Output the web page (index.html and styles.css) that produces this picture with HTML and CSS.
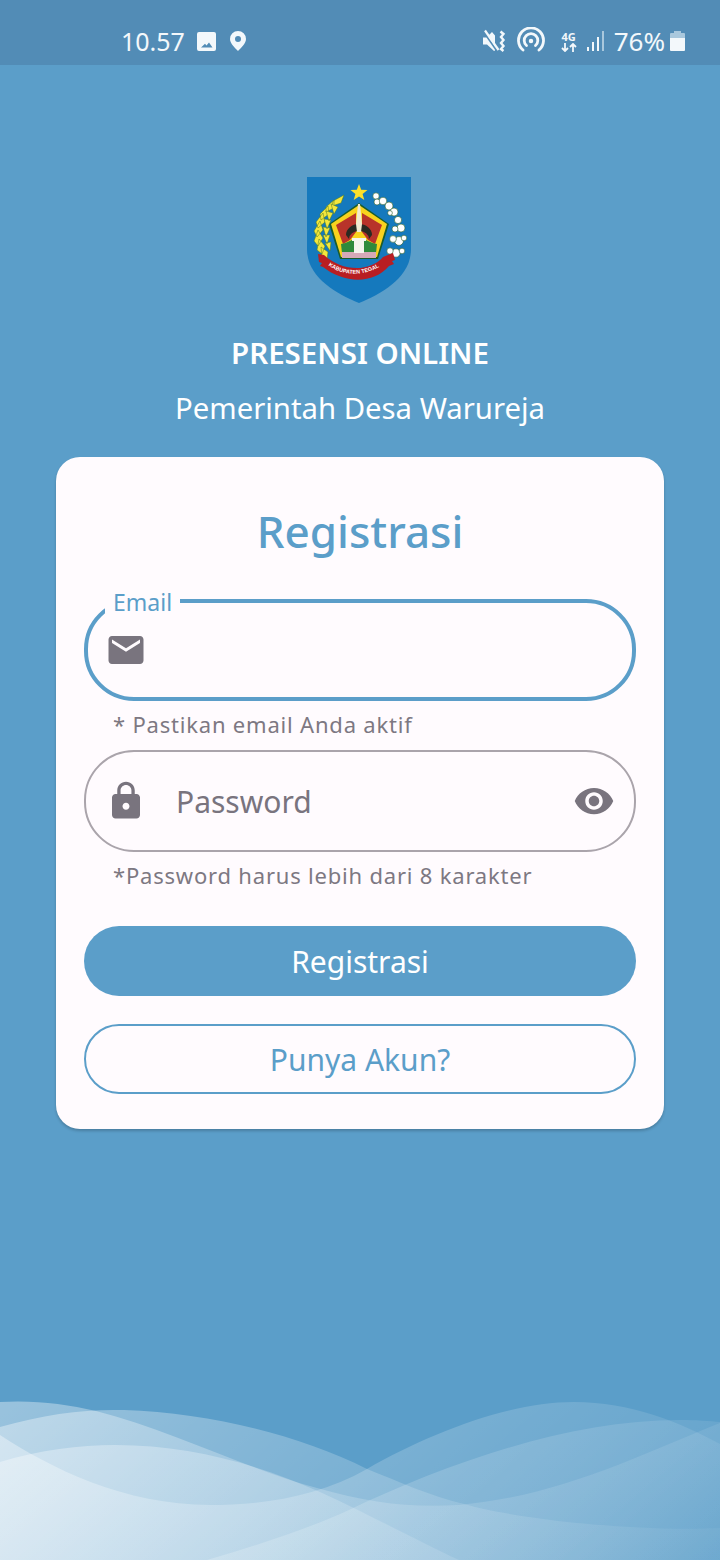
FILE: index.html
```html
<!DOCTYPE html>
<html lang="id">
<head>
    <meta charset="UTF-8">
    <meta name="viewport" content="width=device-width, initial-scale=1.0">
    <title>Presensi Online</title>
    <link rel="stylesheet" href="styles.css">
</head>
<body>
    <svg class="waves" viewBox="0 0 720 160">
        <defs>
            <linearGradient id="waveFill" gradientUnits="userSpaceOnUse" x1="0" y1="0" x2="374" y2="450">
                <stop offset="0" stop-color="#fff" stop-opacity="0.38"/>
                <stop offset="0.25" stop-color="#fff" stop-opacity="0.28"/>
                <stop offset="0.6" stop-color="#fff" stop-opacity="0.15"/>
                <stop offset="1" stop-color="#fff" stop-opacity="0.03"/>
            </linearGradient>
        </defs>
        <path fill="url(#waveFill)" d="M0 2C35 0 65 4 96 11C170 30 250 70 317 88C370 103 410 108 459 105C560 96 640 55 720 23V160H0Z"/>
        <path fill="url(#waveFill)" d="M0 27C45 14 85 9 124 10C210 13 300 35 367 69C400 82 430 96 464 104C520 120 640 132 720 128V160H0Z"/>
        <path fill="url(#waveFill)" d="M0 35C50 68 125 105 210 105C265 105 320 96 367 69C430 33 510 2 574 2C630 2 680 22 720 44V160H0Z"/>
        <path fill="url(#waveFill)" d="M0 62C40 50 80 45 115 45C190 45 260 65 320 92C370 115 420 142 459 160H0Z"/>
        <path fill="url(#waveFill)" d="M207 160C255 146 305 130 349 110C450 62 570 20 680 20C695 20 710 21 720 22V160Z"/>
    </svg>

    <div class="status-bar">
        <div class="status-left">
            <span class="status-time">10.57</span>
            <svg class="icon-pic" viewBox="0 0 19 19"><path fill="#f3f8fb" fill-rule="evenodd" d="M2 0h15a2 2 0 0 1 2 2v15a2 2 0 0 1-2 2H2a2 2 0 0 1-2-2V2a2 2 0 0 1 2-2zm2 15.500h11.500l-3.500-5-2.500 3-1.500-1.800z"/></svg>
            <svg class="icon-pin" viewBox="0 0 16 20"><path fill="#f3f8fb" fill-rule="evenodd" d="M8 0a8 8 0 0 1 8 8c0 4.500-5 9-8 12C5 17 0 12.500 0 8a8 8 0 0 1 8-8zm0 5a3 3 0 1 0 0 6 3 3 0 0 0 0-6z"/></svg>
        </div>
        <div class="status-right">
            <svg class="icon-mute" viewBox="0 0 24 24">
                <path fill="#f3f8fb" d="M1 8.500h3.500L10 3l3 3.500v15l-1 .5-7-6.500H1z"/>
                <path d="M1.500 2.500L15 22" stroke="#528cb6" stroke-width="2" fill="none"/>
                <path d="M3 1.500L16.500 21" stroke="#f3f8fb" stroke-width="2.200" fill="none"/>
                <path d="M18.500 2.500l3 2.500-2.500 3 2.500 3-2.500 3 2.500 3-2.500 3 2.500 2" stroke="#f3f8fb" stroke-width="2.400" fill="none"/>
            </svg>
            <svg class="icon-hotspot" viewBox="0 0 28 28" fill="none" stroke="#f3f8fb" stroke-width="2.800" stroke-linecap="round"><path d="M6 23a12.500 12.500 0 1 1 16 0"/><path d="M9.500 18.500a6.800 6.800 0 1 1 9 0"/><circle cx="14" cy="14" r="1.500" fill="#f3f8fb" stroke-width="1.500"/></svg>
            <span class="net-type">
                <span class="net-label">4G</span>
                <svg class="icon-arrows" viewBox="0 0 16 9" fill="none" stroke="#f3f8fb" stroke-width="1.800"><path d="M4 0v8M1 5l3 3 3-3"/><path d="M12 9V1M9 4l3-3 3 3"/></svg>
            </span>
            <span class="signal">
                <i class="bar bar-1"></i><i class="bar bar-2"></i><i class="bar bar-3"></i><i class="bar bar-4"></i>
            </span>
            <span class="status-batt">76%</span>
            <svg class="icon-batt" viewBox="0 0 15 20"><path fill="#a9c8dd" d="M4 0h7v2h3a1 1 0 0 1 1 1v5H0V3a1 1 0 0 1 1-1h3z"/><path fill="#f3f8fb" d="M0 7h15v12a1 1 0 0 1-1 1H1a1 1 0 0 1-1-1z"/></svg>
        </div>
    </div>

    <main class="content">
        <svg class="crest" viewBox="0 0 104 126">
            <defs>
                <path id="ribbonArc" d="M18 86C38 102 62 100 84 82"/>
            </defs>
            <path fill="#1579bd" d="M0 0h104v72c0 28-28 44-52 54C28 116 0 100 0 72z"/>
            <path fill="#fde02a" d="M52 7l2.200 5.700 6.300.3-4.900 3.900 1.700 6.100-5.300-3.500-5.300 3.500 1.700-6.100-4.900-3.900 6.300-.3z"/>
            <!-- pentagon -->
            <path fill="#1a5c2b" d="M52 26L82 47 71 82H33L22 47z"/>
            <path fill="#f8d21e" d="M52 28L80 47 70 80H34L24 47z"/>
            <path fill="#b8332a" d="M49 36L29 48l7 19 7-4 6-8zM55 36l20 12-7 19-7-4-6-8z"/>
            <path fill="#2a2a22" d="M39 58a13 11 0 0 1 26 0l-3 4a10 8 0 0 0-20 0z"/>
            <path fill="#2e8a3c" d="M34 67c7-1 12-6 18-6s11 5 18 6l-1 9H35z"/>
            <path fill="#d5a9b8" d="M35 75h34v6H35z"/>
            <path fill="#f4f4ee" d="M45 61h14v3h-2v12H47V64h-2z"/>
            <path fill="#f0ead0" d="M51 27h2l2 20-1 8h-4l-1-8z"/>
            <!-- laurel -->
            <path fill="none" stroke="#3a6e28" stroke-width="1.600" d="M36 21C18 30 3 52 20 84"/>
            <g fill="#f4e63c" stroke="#4d7a26" stroke-width=".5">
                <path d="M37 18l-11 6-1 5 9-3zM27 23l-8 7v5l8-4zM21 29l-8 8 1 6 8-6zM16 36l-7 9 2 6 7-6zM13 44l-6 10 3 6 6-7zM11 53l-4 11 4 5 5-8zM12 62l-2 11 5 4 3-8zM14 70l1 11 5 2 1-8z"/>
                <path d="M24 27l3 10 4-7zM19 34l3 10 4-8zM17 42l3 10 4-9zM16 50l3 10 4-9zM16 58l4 9 3-9zM18 66l5 8 1-9z"/>
            </g>
            <!-- cotton -->
            <g fill="#fff" stroke="#2c5f2c" stroke-width=".6">
                <circle cx="69" cy="19" r="3.200"/><circle cx="70" cy="25" r="3"/><circle cx="76" cy="24" r="3.800"/><circle cx="82" cy="29" r="4"/><circle cx="87" cy="35" r="4"/>
                <circle cx="83" cy="36" r="2.400"/><circle cx="91" cy="43" r="3.600"/><circle cx="94" cy="51" r="4"/><circle cx="88" cy="52" r="3"/>
                <circle cx="92" cy="64" r="4.400"/><circle cx="86" cy="62" r="3.400"/><circle cx="97" cy="61" r="2.800"/>
                <circle cx="89" cy="76" r="4.200"/><circle cx="83" cy="74" r="3.200"/><circle cx="95" cy="74" r="2.800"/>
            </g>
            <!-- ribbon -->
            <path fill="#b81e22" d="M11 77l6 1C34 94 62 96 76 80l10-4 2 7-3 1 2 3-5 2C66 108 36 106 16 90l-3-1 2-3-3-1z"/>
            <text class="crest-text"><textPath href="#ribbonArc" startOffset="4">KABUPATEN TEGAL</textPath></text>
        </svg>
        <h1 class="app-title">PRESENSI ONLINE</h1>
        <p class="app-subtitle">Pemerintah Desa Warureja</p>

        <section class="card">
            <h2 class="card-title">Registrasi</h2>

            <div class="field field-active">
                <span class="field-label">Email</span>
                <svg class="field-icon" viewBox="0 0 24 24"><path d="M20 4H4c-1.100 0-1.990.9-1.990 2L2 18c0 1.100.9 2 2 2h16c1.100 0 2-.9 2-2V6c0-1.100-.9-2-2-2zm0 4l-8 5-8-5V6l8 5 8-5v2z"/></svg>
            </div>
            <p class="helper">* Pastikan email Anda aktif</p>

            <div class="field">
                <svg class="field-icon" viewBox="0 0 24 24"><path d="M18 8h-1V6c0-2.760-2.240-5-5-5S7 3.240 7 6v2H6c-1.100 0-2 .9-2 2v10c0 1.100.9 2 2 2h12c1.100 0 2-.9 2-2V10c0-1.100-.9-2-2-2zm-6 9c-1.100 0-2-.9-2-2s.9-2 2-2 2 .9 2 2-.9 2-2 2zm3.100-9H8.900V6c0-1.710 1.390-3.100 3.100-3.100 1.710 0 3.100 1.390 3.100 3.100v2z"/></svg>
                <span class="field-placeholder">Password</span>
                <svg class="field-icon" viewBox="0 0 24 24"><path d="M12 4.500C7 4.500 2.730 7.610 1 12c1.730 4.390 6 7.500 11 7.500s9.270-3.110 11-7.500c-1.730-4.390-6-7.500-11-7.500zM12 17c-2.760 0-5-2.240-5-5s2.240-5 5-5 5 2.240 5 5-2.240 5-5 5zm0-8c-1.660 0-3 1.340-3 3s1.340 3 3 3 3-1.340 3-3-1.340-3-3-3z"/></svg>
            </div>
            <p class="helper helper-last">*Password harus lebih dari 8 karakter</p>

            <button class="btn btn-primary">Registrasi</button>
            <button class="btn btn-outline">Punya Akun?</button>
        </section>
    </main>
</body>
</html>
```

FILE: styles.css
```css
* {
    box-sizing: border-box;
}
body {
    margin: 0;
    width: 720px;
    height: 1560px;
    overflow: hidden;
    position: relative;
    background: #5b9ec9;
    font-family: "Noto Sans", Roboto, sans-serif;
}
.waves {
    position: absolute;
    left: 0;
    bottom: 0;
    width: 720px;
    height: 160px;
}

/* status bar */
.status-bar {
    position: relative;
    height: 65px;
    background: #528cb6;
    color: #f3f8fb;
    display: flex;
    justify-content: space-between;
    align-items: center;
    padding: 17px 35px 0 121px;
}
.status-left, .status-right {
    display: flex;
    align-items: center;
}
.status-time {
    font-size: 25px;
    margin-right: 12px;
}
.icon-pic {
    width: 19px;
    height: 19px;
    margin-right: 14px;
}
.icon-pin {
    width: 16px;
    height: 20px;
}
.icon-mute {
    width: 24px;
    height: 24px;
    margin-right: 11px;
}
.icon-hotspot {
    width: 28px;
    height: 28px;
    margin-right: 16px;
}
.net-type {
    display: flex;
    flex-direction: column;
    align-items: center;
    width: 16px;
    margin-right: 10px;
}
.net-label {
    font-size: 11px;
    line-height: 11px;
    font-weight: 700;
}
.icon-arrows {
    width: 16px;
    height: 9px;
    margin-top: 1px;
}
.signal {
    display: flex;
    align-items: flex-end;
    gap: 3px;
    height: 20px;
    margin-right: 10px;
}
.bar {
    width: 2px;
    background: #f3f8fb;
}
.bar-1 { height: 4px; }
.bar-2 { height: 9px; }
.bar-3 { height: 14px; }
.bar-4 { height: 20px; background: #a9c8dd; }
.status-batt {
    font-size: 26px;
    margin-right: 5px;
}
.icon-batt {
    width: 15px;
    height: 20px;
}

/* header */
.content {
    position: relative;
    display: flex;
    flex-direction: column;
    align-items: center;
    padding-top: 112px;
}
.crest {
    width: 104px;
    height: 126px;
    margin: 0 2px 31px 0;
}
.crest-text {
    font-size: 5.500px;
    font-weight: 700;
    fill: #fff;
    font-family: "Liberation Sans", sans-serif;
}
.app-title {
    margin: 0;
    color: #fff;
    font-size: 29.500px;
    line-height: 38px;
    font-weight: 600;
}
.app-subtitle {
    margin: 16px 0 28px;
    color: #fff;
    font-size: 29.300px;
    line-height: 41px;
}

/* card */
.card {
    width: 608px;
    height: 672px;
    padding: 44px 28px 0;
    background: #fffbfe;
    border-radius: 24px;
    box-shadow: 0 2px 3px rgba(0, 0, 0, 0.2);
    display: flex;
    flex-direction: column;
}
.card-title {
    margin: 0 0 38px;
    color: #5b9ec9;
    font-size: 44px;
    line-height: 60px;
    font-weight: 500;
    text-align: center;
}
.field {
    position: relative;
    height: 102px;
    flex: none;
    border: 2px solid #aaa4ab;
    border-radius: 50px;
    display: flex;
    align-items: center;
    padding: 0 19px;
    gap: 29px;
}
.field-active {
    height: 102px;
    border: 4px solid #5b9ec9;
    padding: 0 17px;
}
.field-label {
    position: absolute;
    left: 17px;
    top: -16px;
    padding: 0 8px;
    background: #fffbfe;
    color: #5b9ec9;
    font-size: 23px;
    line-height: 30px;
}
.field-icon {
    width: 42px;
    height: 42px;
    flex: none;
    fill: #79747e;
}
.field-placeholder {
    flex: 1;
    color: #79747e;
    font-size: 30px;
}
.helper {
    margin: 8px 0 11px 29px;
    color: #7d7882;
    font-size: 22px;
    line-height: 30px;
    letter-spacing: 0.8px;
}
.helper-last {
    margin-bottom: 36px;
}
.btn {
    height: 70px;
    flex: none;
    border-radius: 35px;
    font-family: inherit;
    font-size: 30px;
    padding: 0;
}
.btn-primary {
    background: #5b9ec9;
    border: none;
    color: #fff;
    margin-bottom: 28px;
}
.btn-outline {
    background: transparent;
    border: 2px solid #5b9ec9;
    color: #5b9ec9;
}
```
